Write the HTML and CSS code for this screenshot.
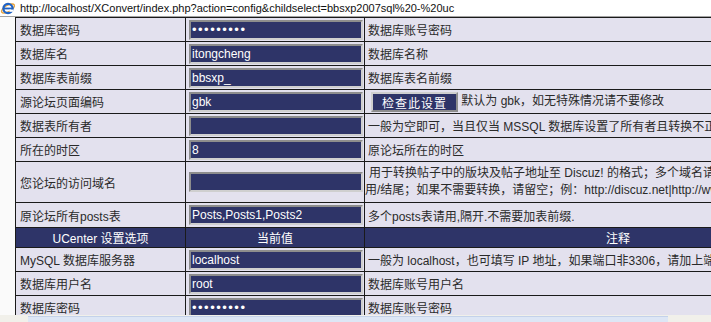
FILE: index.html
```html
<!DOCTYPE html>
<html lang="zh-CN">
<head>
  <meta charset="UTF-8" />
  <title>XConvert 配置</title>
  <link rel="stylesheet" href="styles.css">
</head>
<body>
  <div class="addr">
    <svg class="ie" width="16" height="16" viewBox="0 0 16 16">
      <ellipse cx="8" cy="8.5" rx="7.2" ry="3.2" transform="rotate(-30 8 8.5)" fill="none" stroke="#e8a23a" stroke-width="1.4"/>
      <circle cx="8" cy="8.5" r="4.6" fill="none" stroke="#1f63c6" stroke-width="2.2"/>
      <rect x="4" y="7.6" width="8.4" height="1.8" fill="#1f63c6"/>
      <rect x="9.5" y="9.6" width="4" height="2.2" fill="#fff"/>
    </svg>
    <span class="url">http://localhost/XConvert/index.php?action=config&amp;childselect=bbsxp2007sql%20-%20uc</span>
  </div>

  <div class="page">
    <table class="cfg">
      <colgroup>
        <col class="c1"><col class="c2"><col class="c3">
      </colgroup>
      <tr>
        <td class="lbl">数据库密码</td>
        <td class="val"><input type="password" class="fld" value="123456789"></td>
        <td class="note">数据库账号密码</td>
      </tr>
      <tr>
        <td class="lbl">数据库名</td>
        <td class="val"><input type="text" class="fld" value="itongcheng"></td>
        <td class="note">数据库名称</td>
      </tr>
      <tr>
        <td class="lbl">数据库表前缀</td>
        <td class="val"><input type="text" class="fld" value="bbsxp_"></td>
        <td class="note">数据库表名前缀</td>
      </tr>
      <tr>
        <td class="lbl">源论坛页面编码</td>
        <td class="val"><input type="text" class="fld" value="gbk"></td>
        <td class="note"><button class="btn">检查此设置</button> 默认为 gbk，如无特殊情况请不要修改</td>
      </tr>
      <tr>
        <td class="lbl">数据表所有者</td>
        <td class="val"><input type="text" class="fld" value=""></td>
        <td class="note">一般为空即可，当且仅当 MSSQL 数据库设置了所有者且转换不正确时才需要填写</td>
      </tr>
      <tr>
        <td class="lbl">所在的时区</td>
        <td class="val"><input type="text" class="fld" value="8"></td>
        <td class="note">原论坛所在的时区</td>
      </tr>
      <tr class="tall">
        <td class="lbl">您论坛的访问域名</td>
        <td class="val"><input type="text" class="fld" value=""></td>
        <td class="note wrap"><span class="first">用于转换帖子中的版块及帖子地址至 Discuz! 的格式；多个域名请以逗号隔开，必须以 http:// 开头，使</span><br>用/结尾；如果不需要转换，请留空；例：http://discuz.net|http://www.discuz.net/</td>
      </tr>
      <tr class="r25">
        <td class="lbl">原论坛所有posts表</td>
        <td class="val"><input type="text" class="fld" value="Posts,Posts1,Posts2"></td>
        <td class="note">多个posts表请用,隔开.不需要加表前缀.</td>
      </tr>
      <tr class="head">
        <td>UCenter 设置选项</td>
        <td>当前值</td>
        <td>注释</td>
      </tr>
      <tr>
        <td class="lbl">MySQL 数据库服务器</td>
        <td class="val"><input type="text" class="fld" value="localhost"></td>
        <td class="note">一般为 localhost，也可填写 IP 地址，如果端口非3306，请加上端口号，如 localhost:3307</td>
      </tr>
      <tr>
        <td class="lbl">数据库用户名</td>
        <td class="val"><input type="text" class="fld" value="root"></td>
        <td class="note">数据库账号用户名</td>
      </tr>
      <tr>
        <td class="lbl">数据库密码</td>
        <td class="val"><input type="password" class="fld" value="123456789"></td>
        <td class="note">数据库账号密码</td>
      </tr>
    </table>
  </div>

  <div class="status">
    <div class="status-bar"></div>
  </div>
</body>
</html>
```

FILE: styles.css
```css
html, body {
  margin: 0;
  height: 100%;
  overflow: hidden;
}

body {
  display: flex;
  flex-direction: column;
  background-color: #fafafa;
  font-family: "Liberation Sans", "Noto Sans CJK SC", sans-serif;
  font-size: 12px;
  color: #2a2a2a;
}

.addr {
  flex: 0 0 auto;
  height: 16px;
  display: flex;
  align-items: center;
  gap: 4px;
  background-color: #fff;
  border-bottom: 1px solid #a3a3a3;
}

.ie {
  flex: 0 0 auto;
}

.url {
  font-size: 11px;
  color: #111;
  white-space: nowrap;
}

.page {
  flex: 1 1 auto;
  overflow: hidden;
  padding-left: 15px;
}

.cfg {
  border-collapse: collapse;
  table-layout: fixed;
  width: 856px;
}

.c1 { width: 170px; }
.c2 { width: 179px; }
.c3 { width: 507px; }

.cfg td {
  border: 1px solid #1a1a1a;
  background-color: #e3e1ee;
  padding: 0 3px;
  white-space: nowrap;
  overflow: hidden;
}

.cfg tr {
  height: 24px;
}

.cfg tr.tall {
  height: 41px;
}

.cfg tr.r25 {
  height: 25px;
}

.cfg .lbl {
  padding-left: 4px;
}

.cfg .val {
  padding: 0 0 0 3px;
}

.cfg .note {
  padding-left: 3px;
}

.cfg .wrap {
  padding-left: 0;
  line-height: 17px;
}

.cfg .wrap .first {
  padding-left: 4px;
}

.cfg tr.head {
  height: 20px;
}

.cfg tr.head td {
  background-color: #2e3468;
  color: #fff;
  text-align: center;
}

.fld {
  display: block;
  box-sizing: border-box;
  width: 174px;
  height: 20px;
  margin: 0;
  padding: 0 1px;
  background-color: #2e3468;
  color: #fff;
  border: 2px solid;
  border-color: #8d8d8d #cfcfcf #cfcfcf #8d8d8d;
  font-family: "Liberation Sans", sans-serif;
  font-size: 12px;
  outline: none;
}

.fld[type="password"] {
  letter-spacing: 1.5px;
  font-size: 13px;
}

.btn {
  box-sizing: border-box;
  width: 87px;
  height: 20px;
  margin: 0 0 0 3px;
  padding: 0;
  vertical-align: middle;
  background-color: #2e3468;
  color: #fff;
  border: 2px solid;
  border-color: #cfcfcf #8d8d8d #8d8d8d #cfcfcf;
  font-family: "Liberation Sans", "Noto Sans CJK SC", sans-serif;
  font-size: 12px;
  letter-spacing: 1px;
}

.status {
  flex: 0 0 6px;
  background-color: #f1f0ea;
  padding-left: 28px;
  padding-top: 1px;
}

.status-bar {
  height: 5px;
  width: 640px;
  background-color: #dde6f5;
  border-top: 1px solid #c4d2ea;
}
```
